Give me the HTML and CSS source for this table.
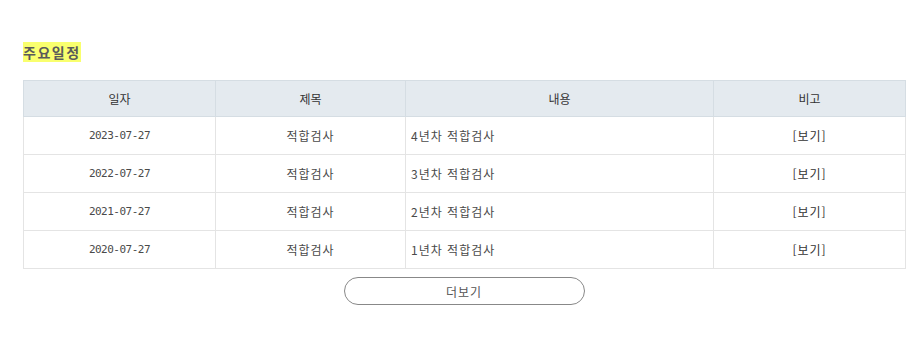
FILE: index.html
```html
<!DOCTYPE html>
<html lang="ko">
<head>
<meta charset="utf-8">
<title>주요일정</title>
<link rel="stylesheet" href="styles.css">
</head>
<body>
<div class="wrap">
  <h2 class="title"><span class="hl">주요일정</span></h2>
  <table class="sched">
    <colgroup>
      <col class="c1"><col class="c2"><col class="c3"><col class="c4">
    </colgroup>
    <thead>
      <tr><th>일자</th><th>제목</th><th>내용</th><th>비고</th></tr>
    </thead>
    <tbody>
      <tr><td class="date">2023-07-27</td><td>적합검사</td><td class="left">4년차 적합검사</td><td><a class="view">[보기]</a></td></tr>
      <tr><td class="date">2022-07-27</td><td>적합검사</td><td class="left">3년차 적합검사</td><td><a class="view">[보기]</a></td></tr>
      <tr><td class="date">2021-07-27</td><td>적합검사</td><td class="left">2년차 적합검사</td><td><a class="view">[보기]</a></td></tr>
      <tr><td class="date">2020-07-27</td><td>적합검사</td><td class="left">1년차 적합검사</td><td><a class="view">[보기]</a></td></tr>
    </tbody>
  </table>
  <div class="more-row"><button class="more">더보기</button></div>
</div>
</body>
</html>
```
FILE: styles.css
```css
html, body {
  margin: 0;
  padding: 0;
  background: #fff;
}
body {
  font-family: "Noto Sans CJK KR", "Noto Sans", sans-serif;
  color: #444;
}
.wrap {
  padding: 42px 13px 0 23px;
}
.title {
  margin: 0 0 18px;
  font-size: 14px;
  line-height: 20px;
  font-weight: 700;
  color: #5a5a5a;
  letter-spacing: 1.5px;
}
.hl {
  background: #f9ff6e;
}
.sched {
  width: 100%;
  border-collapse: collapse;
  table-layout: fixed;
  font-size: 12px;
}
.c1 { width: 192px; }
.c2 { width: 190px; }
.c3 { width: 308px; }
.c4 { width: 192px; }
.sched th {
  height: 35px;
  background: #e4eaef;
  border: 1px solid #d5dde3;
  font-weight: 400;
  color: #333;
  padding: 0;
  text-align: center;
}
.sched td {
  height: 37px;
  border: 1px solid #e4e4e4;
  padding: 0;
  text-align: center;
  color: #4a4a4a;
  letter-spacing: 1px;
}
.sched td.left {
  text-align: left;
  padding-left: 5px;
}
.sched td.date {
  font-family: "DejaVu Sans Mono", "Liberation Mono", monospace;
  font-size: 11px;
  letter-spacing: -0.5px;
}
.view {
  color: #333;
  letter-spacing: 1px;
}
.more-row {
  display: flex;
  justify-content: center;
  padding-top: 8px;
}
.more {
  width: 241px;
  height: 28px;
  border: 1px solid #888;
  border-radius: 14px;
  background: #fff;
  font-family: "Noto Sans CJK KR", sans-serif;
  font-size: 12px;
  color: #555;
  letter-spacing: 1px;
  padding: 0;
}
```
